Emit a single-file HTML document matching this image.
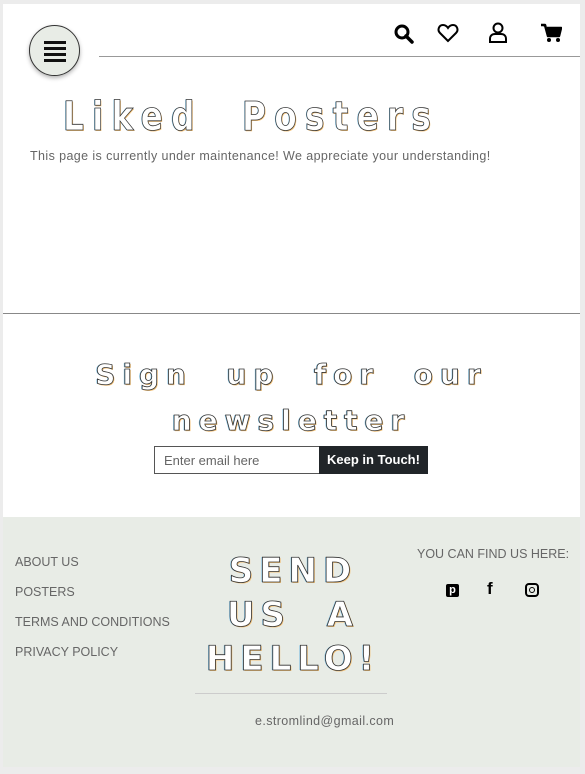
<!DOCTYPE html>
<html><head><meta charset="utf-8"><style>
*{margin:0;padding:0;box-sizing:border-box}
body{width:585px;height:774px;background:#ececec;position:relative;overflow:hidden;font-family:"Liberation Sans",sans-serif}
.page{position:absolute;left:3px;top:4px;width:577px;height:763px;background:#fff}
.a{position:absolute}
.deco{position:absolute;font-family:"DejaVu Sans",sans-serif;font-weight:bold;color:#fff;-webkit-text-stroke:0.8px #333;white-space:nowrap;text-shadow:1px 1px 0 #f3c27a,-1px 0 0 #8cc8e8}
.txt{color:#666;font-size:12.5px;letter-spacing:0.4px}
</style></head><body>
<div class="page">
  <div class="a" style="left:26px;top:21px;width:51px;height:51px;border-radius:50%;background:#e8ece6;border:1px solid #333;box-shadow:0 2px 4px rgba(0,0,0,.3)"></div>
  <div class="a" style="left:41px;top:37px;width:22px;height:3px;background:#111;box-shadow:0 6px 0 #111,0 12px 0 #111,0 18px 0 #111"></div>
  <div class="a" style="left:96px;top:52px;width:481px;height:1px;background:#999"></div>
  <svg class="a" style="left:390px;top:19px" width="22" height="22" viewBox="0 0 22 22"><circle cx="9" cy="9" r="6" fill="none" stroke="#000" stroke-width="3"/><path d="M13 13l6 6" stroke="#000" stroke-width="3.5" stroke-linecap="round"/></svg>
  <svg class="a" style="left:434px;top:19px" width="22" height="20" viewBox="0 0 22 20"><path d="M11 18L3 10C0 7 2 2 6 2c2 0 4 1.5 5 3 1-1.5 3-3 5-3 4 0 6 5 3 8z" fill="none" stroke="#000" stroke-width="2"/></svg>
  <svg class="a" style="left:485px;top:18px" width="20" height="22" viewBox="0 0 20 22"><circle cx="10" cy="6" r="4.5" fill="none" stroke="#000" stroke-width="2"/><path d="M2 20v-3c0-3 2-5 5-5h6c3 0 5 2 5 5v3z" fill="none" stroke="#000" stroke-width="2"/></svg>
  <svg class="a" style="left:537px;top:19px" width="22" height="20" viewBox="0 0 22 20"><path d="M1 2h4l3 11h11l2-8H7" fill="#000" stroke="#000" stroke-width="2.5" stroke-linejoin="round"/><circle cx="9" cy="17" r="2" fill="#000"/><circle cx="18" cy="17" r="2" fill="#000"/></svg>
  <div class="deco" style="left:60px;top:90px;font-size:40px;letter-spacing:10px;transform:scaleX(0.82);transform-origin:left">Liked&nbsp;&nbsp;Posters</div>
  <div class="a txt" style="left:27px;top:145px">This page is currently under maintenance! We appreciate your understanding!</div>
  <div class="a" style="left:0;top:309px;width:577px;height:1px;background:#888"></div>
  <div class="deco" style="left:0;width:577px;text-align:center;top:348px;font-size:28px;letter-spacing:7px;line-height:46px">Sign&nbsp; up&nbsp; for&nbsp; our<br>newsletter</div>
  <div class="a" style="left:151px;top:442px;width:166px;height:28px;border:1px solid #555;font-size:13px;color:#666;padding:6px 9px">Enter email here</div>
  <div class="a" style="left:316px;top:442px;width:109px;height:28px;background:#212529;color:#fff;font-size:13px;font-weight:bold;text-align:center;line-height:28px">Keep in Touch!</div>
  <div class="a" style="left:0;top:513px;width:577px;height:250px;background:#e8ece6">
    <div class="a txt" style="left:12px;top:30px;line-height:30px;letter-spacing:0">ABOUT US<br>POSTERS<br>TERMS AND CONDITIONS<br>PRIVACY POLICY</div>
    <div class="deco" style="left:190px;width:200px;text-align:center;top:32px;font-size:34px;letter-spacing:6px;line-height:44px">SEND<br>US&nbsp; A<br>HELLO!</div>
    <div class="a" style="left:192px;top:176px;width:192px;height:1px;background:#ccc"></div>
    <div class="a txt" style="left:252px;top:197px">e.stromlind@gmail.com</div>
    <div class="a txt" style="left:414px;top:30px;letter-spacing:0">YOU CAN FIND US HERE:</div>
    <div class="a" style="left:443px;top:67px;width:13px;height:13px;background:#000;border-radius:2px;color:#fff;font-size:11px;font-weight:bold;text-align:center;line-height:13px">p</div>
    <div class="a" style="left:484px;top:62px;font-size:17px;font-weight:bold;color:#000">f</div>
    <div class="a" style="left:522px;top:66px;width:14px;height:14px;border:2px solid #000;border-radius:4px"><div style="margin:2px auto;width:6px;height:6px;border:1.5px solid #000;border-radius:50%"></div></div>
  </div>
</div>
</body></html>
